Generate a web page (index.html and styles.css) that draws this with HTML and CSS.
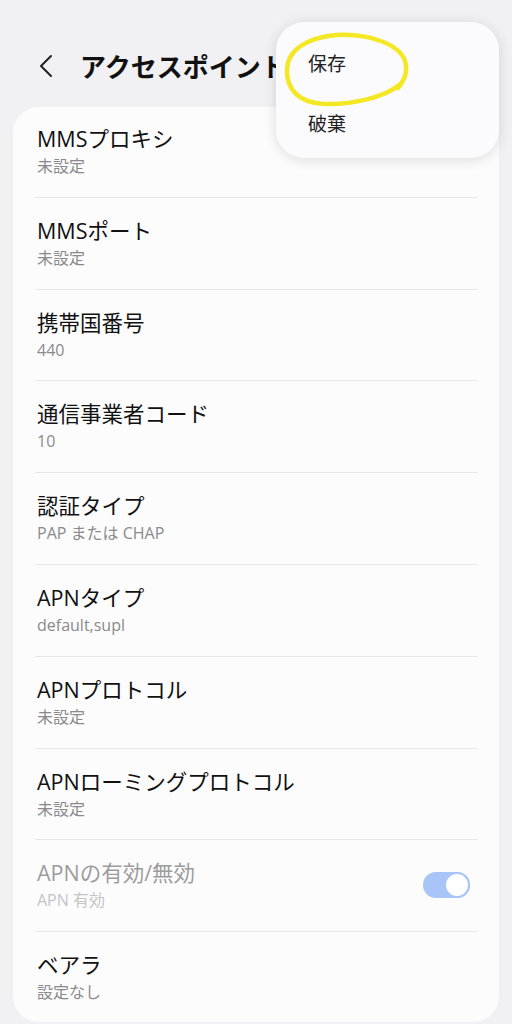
FILE: index.html
```html
<!DOCTYPE html>
<html lang="ja">
<head>
<meta charset="UTF-8">
<link rel="stylesheet" href="styles.css">
</head>
<body>
<div class="appbar">
	<svg class="back" width="16" height="24" viewBox="0 0 16 24"><path d="M13 2 L3 12 L13 22" fill="none" stroke="#222" stroke-width="2" stroke-linecap="round" stroke-linejoin="round"/></svg>
	<h1 class="title">アクセスポイント</h1>
</div>

<div class="card">
	<div class="row first"><div class="name">MMSプロキシ</div><div class="value">未設定</div></div>
	<div class="row"><div class="name">MMSポート</div><div class="value">未設定</div></div>
	<div class="row"><div class="name">携帯国番号</div><div class="value">440</div></div>
	<div class="row"><div class="name">通信事業者コード</div><div class="value">10</div></div>
	<div class="row"><div class="name">認証タイプ</div><div class="value">PAP または CHAP</div></div>
	<div class="row"><div class="name">APNタイプ</div><div class="value">default,supl</div></div>
	<div class="row"><div class="name">APNプロトコル</div><div class="value">未設定</div></div>
	<div class="row"><div class="name">APNローミングプロトコル</div><div class="value">未設定</div></div>
	<div class="row disabled">
		<div class="text"><div class="name">APNの有効/無効</div><div class="value">APN 有効</div></div>
		<div class="switch"><div class="knob"></div></div>
	</div>
	<div class="row last"><div class="name">ベアラ</div><div class="value">設定なし</div></div>
</div>

<div class="menu">
	<div class="menu-item">保存</div>
	<div class="menu-item">破棄</div>
</div>

<svg class="mark" width="512" height="140" viewBox="0 0 512 140">
	<path d="M399 85 C385 97, 352 105, 324 104 C300 103, 286 90, 287 69 C288 50, 306 38, 336 35 C370 33, 400 45, 405 61 C408 72, 405 79, 398 88" fill="none" stroke="#f4e824" stroke-width="4.5" stroke-linecap="round"/>
</svg>
</body>
</html>
```

FILE: styles.css
```css
body{
	margin:0;
	background:#f1f1f3;
	font-family:"Open Sans", "Noto Sans CJK JP", sans-serif;
	color:#111;
}
.appbar{
	height:107px;
	box-sizing:border-box;
	padding:24px 0 0 38px;
	display:flex;
	align-items:center;
	overflow:hidden;
}
.back{
	flex:none;
}
.title{
	margin:0 0 0 26px;
	font-family:"Noto Sans CJK JP", sans-serif;
	font-size:26px;
	font-weight:700;
	white-space:nowrap;
}
.card{
	margin:0 13px;
	background:#fcfcfd;
	border-radius:26px;
	padding-bottom:1px;
}
.row{
	margin:0 21px 0 22px;
	padding:20px 0 20.8px 2px;
	border-bottom:1px solid #e7e7ea;
}
.row.first{
	padding-top:19px;
}
.row.last{
	border-bottom:none;
	padding-bottom:19px;
}
.name{
	font-size:21.5px;
	line-height:26px;
}
.value{
	margin-top:4px;
	font-size:16px;
	line-height:20px;
	color:#8a8a8c;
}
.row.disabled{
	display:flex;
	align-items:center;
	justify-content:space-between;
}
.disabled .name{
	color:#9c9c9e;
}
.disabled .value{
	color:#c4c4c6;
}
.switch{
	width:47px;
	height:26px;
	margin-right:8px;
	border-radius:13px;
	background:#a9c4f7;
	display:flex;
	justify-content:flex-end;
	align-items:center;
}
.knob{
	width:22px;
	height:22px;
	border:2px solid #a9c4f7;
	border-radius:50%;
	background:#fff;
}
.menu{
	position:absolute;
	top:22px;
	left:276px;
	width:223px;
	height:136px;
	box-sizing:border-box;
	padding-top:17px;
	background:#fbfbfd;
	border-radius:28px;
	box-shadow:0 2px 14px rgba(0,0,0,.13);
}
.menu-item{
	padding-left:32px;
	height:60px;
	line-height:48px;
	font-family:"Noto Sans CJK JP", sans-serif;
	font-size:19px;
	color:#222;
}
.mark{
	position:absolute;
	top:0;
	left:0;
	pointer-events:none;
}
```
